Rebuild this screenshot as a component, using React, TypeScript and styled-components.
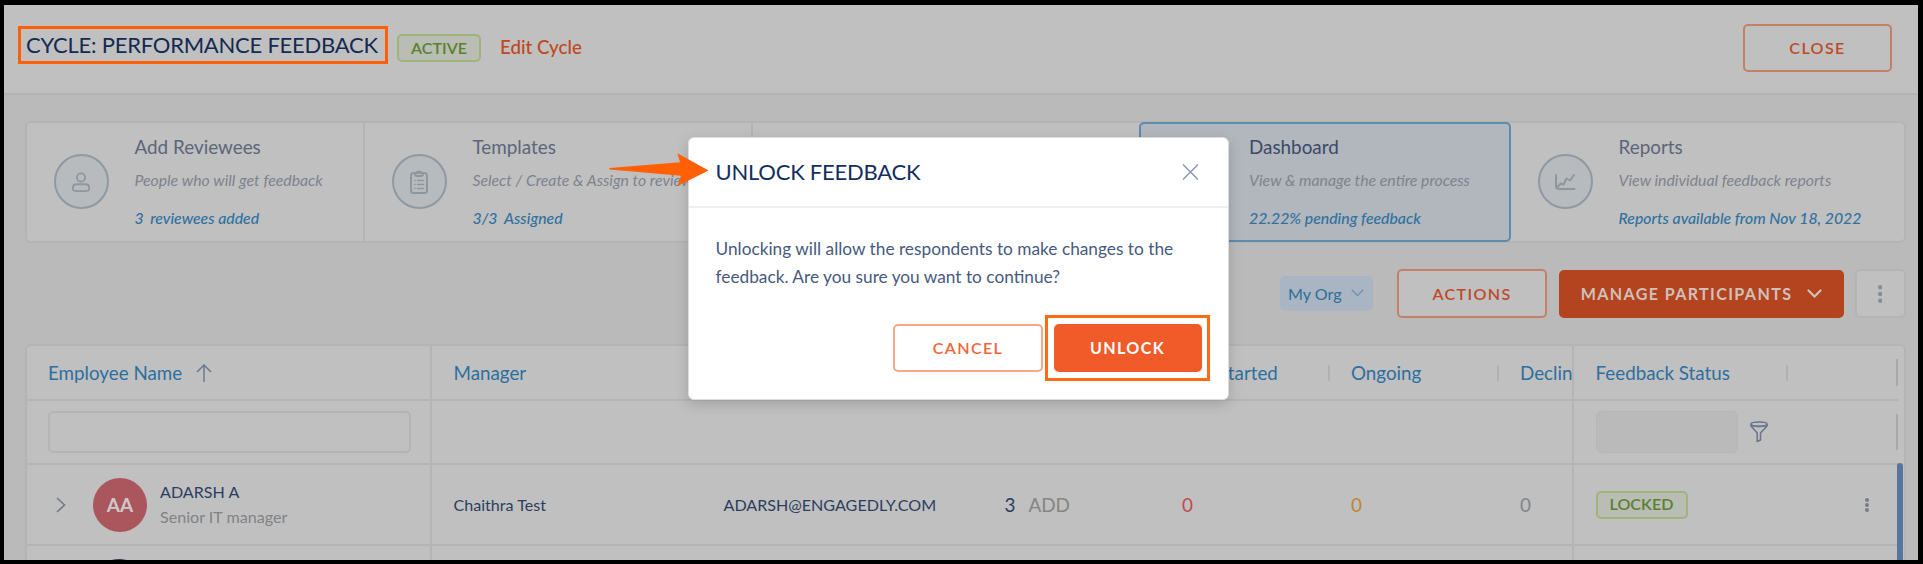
import React from "react";
import styled, { createGlobalStyle } from "styled-components";

const line = "#b4b4b4";
const surface = "#c0c0c0";
const link = "#2d6f9f";
const navy = "#2c3e60";

const GlobalStyle = createGlobalStyle`
  * { box-sizing: border-box; }
  body { margin: 0; background: #000; font-family: Lato, "Liberation Sans", sans-serif; }
  button { font-family: inherit; cursor: pointer; }
`;

const Frame = styled.div`
  position: relative;
  width: 1923px;
  height: 564px;
  padding: 5px 5px 4px 4px;
  background: #000;
  overflow: hidden;
`;
const Page = styled.div`
  height: 555px;
  background: #bababa;
  overflow: hidden;
`;
const Header = styled.header`
  display: flex;
  align-items: flex-start;
  height: 90px;
  padding: 19px 26px 0 14px;
  background: ${surface};
  border-bottom: 2px solid ${line};
`;
const PageTitle = styled.h1`
  margin: 2px 9px 0 0;
  width: 370px;
  height: 38px;
  padding-left: 5px;
  border: 3px solid #ff5f05;
  font-size: 22px;
  letter-spacing: -0.24px;
  font-weight: 400;
  line-height: 32px;
  white-space: nowrap;
  color: #132a52;
`;
const Badge = styled.span<{ $w: number }>`
  display: flex;
  align-items: center;
  justify-content: center;
  width: ${(p) => p.$w}px;
  height: 28px;
  padding-bottom: 2px;
  border: 2px solid #9fb47c;
  border-radius: 5px;
  background: #b9bdb3;
  color: #58812f;
  font-size: 16.1px;
  font-weight: 600;
`;
const HeaderBadge = styled(Badge)`
  margin-top: 10px;
`;
const EditLink = styled.a`
  margin: 11px auto 0 19px;
  color: #bf4721;
  font-size: 18.7px;
  font-weight: 500;
  line-height: 24px;
`;

const Button = styled.button<{ $w: number; $primary?: boolean; $dim?: boolean }>`
  display: flex;
  align-items: center;
  justify-content: center;
  gap: 15px;
  width: ${(p) => p.$w}px;
  height: 48px;
  padding: 0 0 1px 0;
  border-radius: 5px;
  border: 2px solid ${(p) => (p.$primary ? (p.$dim ? "#b4441f" : "#f15a29") : p.$dim ? "#c38069" : "#f8a78c")};
  background: ${(p) => (p.$primary ? (p.$dim ? "#b4441f" : "#f15a29") : p.$dim ? surface : "#fff")};
  color: ${(p) => (p.$primary ? (p.$dim ? "#cfc0ba" : "#fff") : p.$dim ? "#be4a26" : "#f1643a")};
  font-size: 16.1px;
  font-weight: ${(p) => (p.$primary ? 700 : 600)};
  letter-spacing: 1.36px;
`;

const Steps = styled.section`
  display: grid;
  grid-template-columns: 338px 388px 386px 372px 395px;
  width: 1881px;
  height: 122px;
  margin: 26px 0 0 21px;
  border: 2px solid ${line};
  border-radius: 6px;
  background: ${surface};
`;
const Step = styled.article<{ $divided?: boolean; $active?: boolean }>`
  display: flex;
  align-items: flex-start;
  padding-left: ${(p) => (p.$active ? "27px" : "26.5px")};
  overflow: hidden;
  border-right: ${(p) => (p.$divided ? `2px solid ${line}` : "0")};
  ${(p) =>
    p.$active &&
    `margin: -1px 0 -1px 0; border: 2px solid #5d8caf; border-radius: 5px; background: #b2b6bd;`}
`;
const Circle = styled.div`
  flex: none;
  display: flex;
  align-items: center;
  justify-content: center;
  width: 55px;
  height: 55px;
  margin: 31px 26px 0 0;
  border: 2px solid #8f99a3;
  border-radius: 50%;
  background: #b8bbbe;
`;
const StepText = styled.div<{ $active?: boolean }>`
  margin-top: ${(p) => (p.$active ? 11 : 12)}px;
  white-space: nowrap;
  h2 { margin: 0; font-size: 18.85px; line-height: 24px; font-weight: 400; color: ${(p) => (p.$active ? "#3b4a68" : "#5b667c")}; }
  p { margin: 9px 0 0; font-size: 15.8px; line-height: 24px; font-style: italic; color: #7e838d; }
  strong { display: block; margin-top: 14px; font-size: 15.8px; line-height: 24px; font-style: italic; font-weight: 500; color: #2f719f; }
  i { margin-right: 6.5px; }
`;

const Toolbar = styled.div`
  display: flex;
  align-items: center;
  justify-content: flex-end;
  height: 49px;
  margin: 26px 12px 0 0;
`;
const Scope = styled.button`
  display: flex;
  align-items: center;
  gap: 9px;
  width: 93px;
  height: 35px;
  margin-right: 24px;
  padding: 0 0 1px 8px;
  border: 0;
  border-radius: 5px;
  background: #a9b5c2;
  color: #2d6e9c;
  font-size: 16.1px;
  white-space: nowrap;
`;
const ActionsButton = styled(Button)`
  height: 49px;
  margin-right: 12px;
`;
const ManageButton = styled(Button)`
  margin-right: 11px;
`;
const MoreButton = styled.button`
  display: flex;
  align-items: center;
  justify-content: center;
  width: 51px;
  height: 49px;
  padding: 0 1px 0 0;
  border: 2px solid ${line};
  border-radius: 5px;
  background: ${surface};
`;

const Table = styled.section`
  display: grid;
  grid-template-columns: 405px 1142px 1fr;
  width: 1881px;
  height: 240px;
  margin: 26px 0 0 21px;
  border: 2px solid ${line};
  border-radius: 6px;
  background: ${surface};
`;
const Pane = styled.div<{ $divided?: boolean }>`
  overflow: hidden;
  border-right: ${(p) => (p.$divided ? `2px solid ${line}` : "0")};
`;
const Line = styled.div<{ $h: number; $cols?: string; $pad?: number }>`
  display: ${(p) => (p.$cols ? "grid" : "flex")};
  grid-template-columns: ${(p) => p.$cols || "none"};
  align-items: center;
  height: ${(p) => p.$h}px;
  padding-left: ${(p) => p.$pad ?? 0}px;
  border-bottom: 2px solid ${line};
  white-space: nowrap;
`;
const Heading = styled.div`
  display: flex;
  align-items: center;
  color: ${link};
  font-size: 18.8px;
  font-weight: 400;
  svg { margin-left: 14px; }
`;
const Grip = styled.span<{ $right: number }>`
  width: 2px;
  height: 16px;
  margin: 0 ${(p) => p.$right}px 0 auto;
  background: #b1b1b1;
`;
const FilterInput = styled.input`
  width: 363px;
  height: 42px;
  border: 2px solid ${line};
  border-radius: 5px;
  background: ${surface};
`;
const FilterSelect = styled.div`
  width: 142px;
  height: 42px;
  margin-right: 12px;
  border: 1px solid #b6b6b6;
  border-radius: 6px;
  background: #bababa;
`;
const Avatar = styled.div`
  display: flex;
  align-items: center;
  justify-content: center;
  width: 54px;
  height: 54px;
  margin: 0 13px 0 27px;
  padding-bottom: 1px;
  border-radius: 50%;
  background: #ab555d;
  color: #cfc8c9;
  font-size: 19px;
  font-weight: 700;
`;
const NextAvatar = styled(Avatar)`
  flex: none;
  align-self: flex-start;
  margin: 13px 0 0 37px;
  background: #30324a;
`;
const Person = styled.div`
  margin-bottom: 2px;
  font-size: 16.1px;
  line-height: 25px;
  color: ${navy};
  font-weight: 400;
  small { display: block; font-size: 16.1px; font-weight: 400; color: #808386; }
`;
const Value = styled.span`
  margin-bottom: 1px;
  font-size: 16.1px;
  font-weight: 400;
  color: ${navy};
`;
const Count = styled.span<{ $c: string }>`
  margin-right: 13px;
  margin-bottom: 1px;
  font-size: 18.9px;
  color: ${(p) => p.$c};
`;
const Pinned = styled.div`
  position: relative;
`;
const EdgeTick = styled.span<{ $h: number }>`
  width: 2px;
  height: ${(p) => p.$h}px;
  margin-left: auto;
  background: #a9a9a9;
`;
const StatusGrip = styled(Grip)`
  margin: 0 0 0 56px;
`;
const PinnedLine = styled(Line)`
  margin-right: 6px;
  padding-left: 21.5px;
`;
const RowMenu = styled.span`
  margin: 0 29px 0 auto;
  display: flex;
`;
const Scrollbar = styled.div`
  position: absolute;
  right: 1px;
  top: 117px;
  width: 6px;
  height: 110px;
  border-radius: 4px;
  background: #5774a0;
`;

const Modal = styled.section`
  position: absolute;
  left: 688px;
  top: 137px;
  width: 541px;
  height: 263px;
  border: 1px solid #dcdcdc;
  border-radius: 6px;
  background: #fff;
  box-shadow: 0 4px 14px rgba(0, 0, 0, 0.16);
`;
const ModalHeader = styled.header`
  display: flex;
  align-items: center;
  justify-content: space-between;
  height: 70px;
  padding: 0 29px 0 26.5px;
  border-bottom: 2px solid #eeeeee;
  h2 { margin: 0 0 2px; font-size: 22px; letter-spacing: -0.24px; font-weight: 400; color: #132f60; }
`;
const ModalText = styled.p`
  margin: 27px 0 0 26.5px;
  width: 480px;
  color: #475a80;
  font-size: 17.27px;
  line-height: 28px;
`;
const ModalActions = styled.footer`
  display: flex;
  align-items: center;
  margin: 24px 0 0 204px;
  gap: 2px;
`;
const Highlight = styled.div`
  display: flex;
  align-items: center;
  justify-content: center;
  width: 165px;
  height: 66px;
  border: 3px solid #ff6a14;
`;
const Arrow = styled.svg`
  position: absolute;
  left: 608px;
  top: 152px;
`;

const Chevron = ({ w, c, s }: { w: number; c: string; s: number }) => (
  <svg width={w} height={w * 0.6} viewBox="0 0 20 12" fill="none" stroke={c} strokeWidth={s} strokeLinecap="round">
    <path d="M2 2 L10 10 L18 2" />
  </svg>
);
const Dots = ({ h, r, c }: { h: number; r: number; c: string }) => (
  <svg width={r * 2} height={h} fill={c}>
    <circle cx={r} cy={r} r={r} />
    <circle cx={r} cy={h / 2} r={r} />
    <circle cx={r} cy={h - r} r={r} />
  </svg>
);
const iconStroke = { fill: "none", stroke: "#8f979e", strokeWidth: 2, strokeLinecap: "round", strokeLinejoin: "round" } as const;
const UserIcon = () => (
  <svg width="20" height="22" viewBox="0 0 22 24" {...iconStroke}>
    <circle cx="11" cy="7" r="4.5" />
    <path d="M2 20 V18.5 Q2 14.5 6 14.5 H16 Q20 14.5 20 18.5 V20 Q20 21 18.5 21.4 Q11 22.8 3.5 21.4 Q2 21 2 20Z" />
  </svg>
);
const ClipboardIcon = () => (
  <svg width="20" height="24" viewBox="0 0 20 24" {...iconStroke}>
    <rect x="2" y="3" width="16" height="20" rx="2.5" />
    <path d="M6 3 V4 Q6 6 8 6 H12 Q14 6 14 4 V3 M7.5 2.5 Q10 0.6 12.5 2.5" />
    <path strokeWidth="1.5" d="M5.5 10.5 H6 M8.5 10.5 H14.5 M5.5 14.5 H6 M8.5 14.5 H14.5 M5.5 18.5 H6 M8.5 18.5 H14.5" />
  </svg>
);
const ChartIcon = () => (
  <svg width="22" height="18" viewBox="0 0 22 18" {...iconStroke}>
    <path d="M2 2 V13 Q2 16 5 16 H20.5" />
    <path d="M3 14.5 L7 10.3 L9.5 11.5 L12.5 5.5 L16 7.5 L20 2" />
  </svg>
);
const FunnelIcon = () => (
  <svg width="18" height="22" viewBox="0 0 18 22" fill="none" stroke="#66748c" strokeWidth="1.5" strokeLinejoin="round">
    <ellipse cx="9" cy="3" rx="8" ry="2" />
    <path d="M1 3 V5 L7.2 12 V20.5 L10.5 19 V12 L17 5 V3" />
    <path d="M1.5 5 Q9 6.8 16.5 5" strokeWidth="1" />
  </svg>
);

const midCols = "270px 281px 177.5px 169px 169px 1fr";

export default function App() {
  return (
    <Frame>
      <GlobalStyle />
      <Page>
        <Header>
          <PageTitle>CYCLE: PERFORMANCE FEEDBACK</PageTitle>
          <HeaderBadge $w={84}>ACTIVE</HeaderBadge>
          <EditLink>Edit Cycle</EditLink>
          <Button $w={149} $dim>CLOSE</Button>
        </Header>

        <Steps>
          <Step $divided>
            <Circle><UserIcon /></Circle>
            <StepText>
              <h2>Add Reviewees</h2>
              <p>People who will get feedback</p>
              <strong><i>3</i>reviewees added</strong>
            </StepText>
          </Step>
          <Step $divided>
            <Circle><ClipboardIcon /></Circle>
            <StepText>
              <h2>Templates</h2>
              <p>Select / Create &amp; Assign to reviewees</p>
              <strong><i>3/3</i>Assigned</strong>
            </StepText>
          </Step>
          <Step />
          <Step $active>
            <Circle><ChartIcon /></Circle>
            <StepText $active>
              <h2>Dashboard</h2>
              <p>View &amp; manage the entire process</p>
              <strong>22.22% pending feedback</strong>
            </StepText>
          </Step>
          <Step>
            <Circle><ChartIcon /></Circle>
            <StepText>
              <h2>Reports</h2>
              <p>View individual feedback reports</p>
              <strong>Reports available from Nov 18, 2022</strong>
            </StepText>
          </Step>
        </Steps>

        <Toolbar>
          <Scope>My Org <Chevron w={13} c="#6f93b0" s={2.4} /></Scope>
          <ActionsButton $w={150} $dim>ACTIONS</ActionsButton>
          <ManageButton $w={285} $dim $primary>
            MANAGE PARTICIPANTS <Chevron w={15} c="#cfc0ba" s={3} />
          </ManageButton>
          <MoreButton><Dots h={18} r={2.2} c="#868d96" /></MoreButton>
        </Toolbar>

        <Table>
          <Pane $divided>
            <Line $h={55} $pad={21}>
              <Heading>
                Employee Name
                <svg width="16" height="18" viewBox="0 0 16 18" fill="none" stroke="#6d7890" strokeWidth="1.5">
                  <path d="M8 18 V1 M1 8 L8 1 L15 8" />
                </svg>
              </Heading>
            </Line>
            <Line $h={64} $pad={21}><FilterInput /></Line>
            <Line $h={81} $pad={29}>
              <svg width="10" height="16" viewBox="0 0 10 16" fill="none" stroke="#747c8a" strokeWidth="1.7">
                <path d="M1 1 L8.5 8 L1 15" />
              </svg>
              <Avatar>AA</Avatar>
              <Person>ADARSH A<small>Senior IT manager</small></Person>
            </Line>
            <Line $h={81} $pad={28}><NextAvatar /></Line>
          </Pane>
          <Pane $divided>
            <Line $h={55} $pad={21.5} $cols={midCols}>
              <Heading>Manager</Heading>
              <Heading>Email</Heading>
              <Heading>Reviewers</Heading>
              <Heading>Not Started<Grip $right={21} /></Heading>
              <Heading>Ongoing<Grip $right={21} /></Heading>
              <Heading>Declined</Heading>
            </Line>
            <Line $h={64} />
            <Line $h={81} $pad={21.5} $cols={midCols}>
              <Value>Chaithra Test</Value>
              <Value>ADARSH@ENGAGEDLY.COM</Value>
              <span><Count $c={navy}>3</Count><Count $c="#858585">ADD</Count></span>
              <Count $c="#c4484d">0</Count>
              <Count $c="#bd8534">0</Count>
              <Count $c="#7f858d">0</Count>
            </Line>
          </Pane>
          <Pinned>
            <PinnedLine $h={55}>
              <Heading>Feedback Status</Heading>
              <StatusGrip $right={0} />
              <EdgeTick $h={27} />
            </PinnedLine>
            <PinnedLine $h={64}>
              <FilterSelect />
              <FunnelIcon />
              <EdgeTick $h={36} />
            </PinnedLine>
            <PinnedLine $h={81}>
              <Badge $w={92}>LOCKED</Badge>
              <RowMenu><Dots h={14} r={2} c="#747d8a" /></RowMenu>
            </PinnedLine>
            <Scrollbar />
          </Pinned>
        </Table>
      </Page>

      <Modal>
        <ModalHeader>
          <h2>UNLOCK FEEDBACK</h2>
          <svg width="17" height="16" viewBox="0 0 17 16" fill="none" stroke="#8c9ab3" strokeWidth="1.5">
            <path d="M1 0.5 L16 15.5 M16 0.5 L1 15.5" />
          </svg>
        </ModalHeader>
        <ModalText>
          Unlocking will allow the respondents to make changes to the
          <br />
          feedback. Are you sure you want to continue?
        </ModalText>
        <ModalActions>
          <Button $w={150}>CANCEL</Button>
          <Highlight><Button $w={148} $primary>UNLOCK</Button></Highlight>
        </ModalActions>
      </Modal>
      <Arrow width="102" height="36" viewBox="608 152 102 36" fill="#ff5f05">
        <path d="M609.5 168 L680 162.3 L677.5 153.3 L708.5 170.5 L677.5 186 L681 175.7 L609.5 169.5 Z" />
      </Arrow>
    </Frame>
  );
}
